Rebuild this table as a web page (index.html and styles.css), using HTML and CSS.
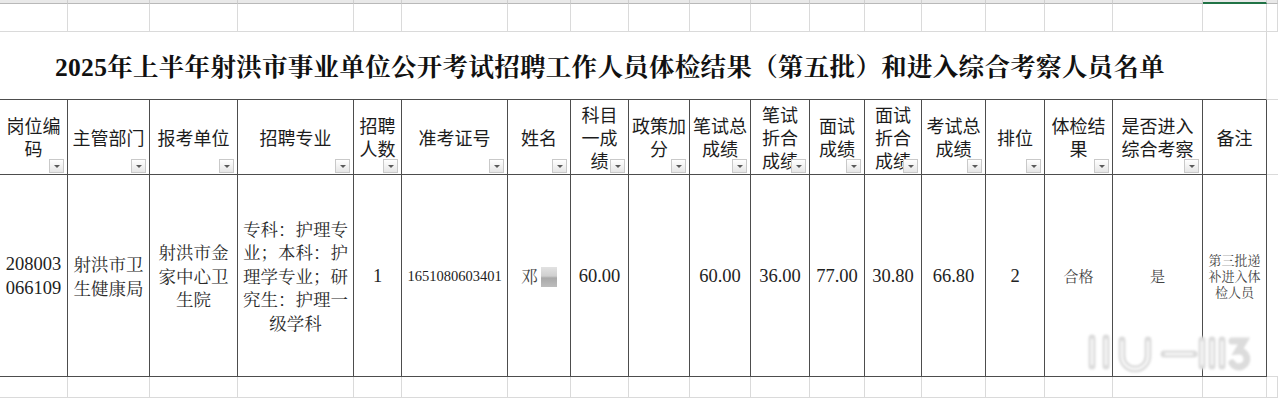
FILE: index.html
```html
<!DOCTYPE html>
<html lang="zh-CN">
<head>
<meta charset="utf-8">
<title>体检结果和进入综合考察人员名单</title>
<link rel="stylesheet" href="styles.css">
</head>
<body>
<div class="sheet">
  <!-- partial row above -->
  <div class="c top"></div><div class="c top"></div><div class="c top"></div><div class="c top"></div><div class="c top"></div><div class="c top"></div><div class="c top"></div><div class="c top"></div><div class="c top"></div><div class="c top"></div><div class="c top"></div><div class="c top"></div><div class="c top"></div><div class="c top"></div><div class="c top"></div><div class="c top"></div><div class="c top"></div><div class="c top sel"></div><div class="c top"></div>
  <!-- empty row -->
  <div class="c gl"></div><div class="c gl"></div><div class="c gl"></div><div class="c gl"></div><div class="c gl"></div><div class="c gl"></div><div class="c gl"></div><div class="c gl"></div><div class="c gl"></div><div class="c gl"></div><div class="c gl"></div><div class="c gl"></div><div class="c gl"></div><div class="c gl"></div><div class="c gl"></div><div class="c gl"></div><div class="c gl"></div><div class="c gl"></div><div class="c gl"></div>
  <!-- title row -->
  <div class="c title"><h1>2025年上半年射洪市事业单位公开考试招聘工作人员体检结果（第五批）和进入综合考察人员名单</h1></div>
  <div class="c side"></div>
  <!-- header row -->
  <div class="c hd"><span class="t">岗位编码</span><i class="dd"></i></div>
  <div class="c hd"><span class="t">主管部门</span><i class="dd"></i></div>
  <div class="c hd"><span class="t">报考单位</span><i class="dd"></i></div>
  <div class="c hd"><span class="t">招聘专业</span><i class="dd"></i></div>
  <div class="c hd"><span class="t">招聘人数</span><i class="dd"></i></div>
  <div class="c hd"><span class="t">准考证号</span><i class="dd"></i></div>
  <div class="c hd"><span class="t">姓名</span><i class="dd"></i></div>
  <div class="c hd"><span class="t">科目一成绩</span><i class="dd"></i></div>
  <div class="c hd"><span class="t">政策加分</span><i class="dd"></i></div>
  <div class="c hd"><span class="t">笔试总成绩</span><i class="dd"></i></div>
  <div class="c hd"><span class="t">笔试折合成绩</span><i class="dd"></i></div>
  <div class="c hd"><span class="t">面试成绩</span><i class="dd"></i></div>
  <div class="c hd"><span class="t">面试折合成绩</span><i class="dd"></i></div>
  <div class="c hd"><span class="t">考试总成绩</span><i class="dd"></i></div>
  <div class="c hd"><span class="t">排位</span><i class="dd"></i></div>
  <div class="c hd"><span class="t">体检结果</span><i class="dd"></i></div>
  <div class="c hd"><span class="t">是否进入综合考察</span><i class="dd"></i></div>
  <div class="c hd"><span class="t">备注</span></div>
  <div class="c side"></div>
  <!-- data row -->
  <div class="c td num brk">208003066109</div>
  <div class="c td cjk">射洪市卫生健康局</div>
  <div class="c td cjk">射洪市金家中心卫生院</div>
  <div class="c td cjk">专科：护理专业；本科：护理学专业；研究生：护理一级学科</div>
  <div class="c td num">1</div>
  <div class="c td num small">1651080603401</div>
  <div class="c td cjk name">邓<span class="blur"></span></div>
  <div class="c td num">60.00</div>
  <div class="c td num"></div>
  <div class="c td num">60.00</div>
  <div class="c td num">36.00</div>
  <div class="c td num">77.00</div>
  <div class="c td num">30.80</div>
  <div class="c td num">66.80</div>
  <div class="c td num">2</div>
  <div class="c td cjk mid">合格</div>
  <div class="c td cjk mid">是</div>
  <div class="c td cjk note">第三批递补进入体检人员</div>
  <div class="c side"></div>
  <!-- empty row below -->
  <div class="c gl"></div><div class="c gl"></div><div class="c gl"></div><div class="c gl"></div><div class="c gl"></div><div class="c gl"></div><div class="c gl"></div><div class="c gl"></div><div class="c gl"></div><div class="c gl"></div><div class="c gl"></div><div class="c gl"></div><div class="c gl"></div><div class="c gl"></div><div class="c gl"></div><div class="c gl"></div><div class="c gl"></div><div class="c gl"></div><div class="c gl"></div>

  <svg class="wm" width="170" height="42" viewBox="0 0 170 42" aria-hidden="true">
    <g fill="none" stroke="#dcdcdc" stroke-width="7" stroke-linecap="round">
      <path d="M10 6 V34 M24 6 V34"/>
      <path d="M40 8 V24 A13 13 0 0 0 66 24 V8"/>
      <path d="M82 22 H112"/>
      <path d="M120 8 V34 M130 8 V34 M140 8 V34"/>
      <path d="M150 9 H162 L156 19 A8 8 0 1 1 150 31"/>
    </g>
    <g fill="none" stroke="#f7f7f7" stroke-width="2.5" stroke-linecap="round">
      <path d="M10 8 V32 M24 8 V32"/>
      <path d="M40 10 V24 A13 13 0 0 0 66 24 V10"/>
      <path d="M84 22 H110"/>
      <path d="M120 10 V32 M130 10 V32 M140 10 V32"/>
    </g>
  </svg>
</div>
</body>
</html>
```

FILE: styles.css
```css
* { box-sizing: border-box; }

html, body {
  margin: 0;
  padding: 0;
  background: #ffffff;
}

.sheet {
  position: relative;
  width: 1278px;
  height: 398px;
  overflow: hidden;
  display: grid;
  grid-template-columns: 68px 82px 88px 116px 48px 106px 63px 58px 61px 61px 59px 55px 57px 64px 59px 68px 90px 64px 11px;
  grid-template-rows: 4px 28px 68px 75px 202px 21px;
  font-family: "Liberation Serif", "Noto Serif CJK SC", "Noto Sans CJK SC", serif;
  color: #222;
}

.c {
  min-width: 0;
}

.top {
  background: #e9e9e9;
  border-right: 1px solid #cfcfcf;
  border-bottom: 1px solid #b9b9b9;
}

.top.sel {
  border-bottom: 2px solid #217346;
}

.gl {
  border-right: 1px solid #dadada;
  border-bottom: 1px solid #dadada;
}

.title {
  grid-column: 1 / span 18;
  border-right: 1px solid #d6d6d6;
  border-bottom: 1px solid #4d4d4d;
  display: flex;
  align-items: center;
  padding: 0 0 2px 55px;
}

.title h1 {
  margin: 0;
  font-family: "Liberation Serif", "Noto Serif CJK SC", "Noto Sans CJK SC", serif;
  font-weight: bold;
  font-size: 25.5px;
  letter-spacing: 0.3px;
  color: #111;
  white-space: nowrap;
}

.side {
  border-bottom: 1px solid #dadada;
}

.hd {
  position: relative;
  border-right: 1px solid #4d4d4d;
  border-bottom: 1px solid #4d4d4d;
  display: flex;
  align-items: center;
  justify-content: center;
  padding: 0 3px;
  text-align: center;
  font-family: "Noto Sans CJK SC", "Noto Sans", sans-serif;
  font-size: 18px;
  line-height: 23px;
  color: #1c1c1c;
}

.hd .t {
  display: block;
}

.dd {
  position: absolute;
  right: 3px;
  bottom: 1px;
  width: 15px;
  height: 14px;
  border: 1px solid #c9c9c9;
  background: linear-gradient(#ffffff, #e6e6e6);
}

.dd::after {
  content: "";
  position: absolute;
  left: 4px;
  top: 5px;
  border-left: 3px solid transparent;
  border-right: 3px solid transparent;
  border-top: 3px solid #5a5a5a;
}

.td {
  border-right: 1px solid #4d4d4d;
  border-bottom: 1px solid #4d4d4d;
  display: flex;
  align-items: center;
  justify-content: center;
  padding: 0 3px;
  text-align: center;
  font-size: 18px;
  line-height: 24px;
}

.num {
  font-family: "Liberation Serif", serif;
  font-size: 18.5px;
}

.brk {
  word-break: break-all;
}

.num.small {
  font-size: 14.5px;
}

.cjk {
  font-family: "Noto Serif CJK SC", "Noto Sans CJK SC", serif;
  font-size: 17.5px;
  color: #2a2a2a;
  line-height: 23.5px;
}

.name {
  gap: 3px;
  font-size: 17px;
  color: #444;
}

.blur {
  display: inline-block;
  width: 16px;
  height: 20px;
  margin-top: 2px;
  background: linear-gradient(to bottom, #e2e2e2 0%, #cfcfcf 45%, #a9a9a9 55%, #bdbdbd 100%);
  filter: blur(0.6px);
}

.mid {
  font-size: 15px;
  color: #444;
}

.note {
  font-size: 13px;
  line-height: 16px;
  color: #444;
  padding: 0 5px;
}

.wm {
  position: absolute;
  left: 1082px;
  top: 332px;
  filter: blur(1.2px);
}
```
